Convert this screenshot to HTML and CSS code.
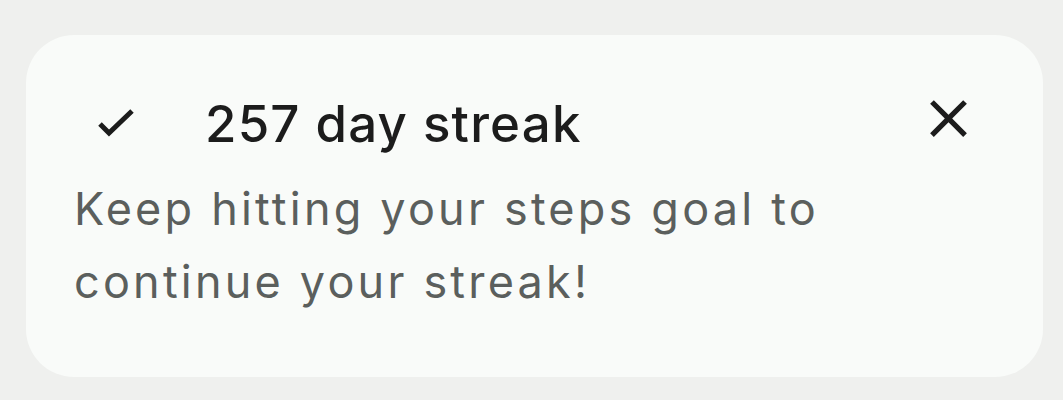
FILE: index.html
```html
<!DOCTYPE html>
<html lang="en">

<head>
  <meta charset="UTF-8">
  <meta name="viewport" content="width=device-width, initial-scale=1.0">
  <title>Streak</title>
  <link rel="stylesheet" href="styles.css">
</head>

<body>
  <div class="card">
    <div class="card-head">
      <svg class="check" viewBox="0 0 40 32" width="40" height="32">
        <polyline points="4,17 13,26 36,4" />
      </svg>
      <h1 class="title">257 day streak</h1>
      <svg class="close" viewBox="0 0 24 24" width="63" height="63">
        <path d="M19 6.41L17.59 5 12 10.59 6.41 5 5 6.41 10.59 12 5 17.59 6.41 19 12 13.41 17.59 19 19 17.59 13.41 12z" />
      </svg>
    </div>
    <p class="text">Keep hitting your steps goal to continue your streak!</p>
  </div>
</body>

</html>
```

FILE: styles.css
```css
body {
  margin: 0;
  padding: 35px 20px 0 26px;
  background-color: #eff0ee;
  font-family: Inter, Roboto, sans-serif;
}

.card {
  box-sizing: border-box;
  width: 1017px;
  height: 342px;
  padding: 52px 63px 0 48px;
  border-radius: 48px;
  background-color: #f9fbf9;
}

.card-head {
  display: flex;
  align-items: flex-start;
}

.check {
  margin: 20px 0 0 22px;
  fill: none;
  stroke: #1c1c1c;
  stroke-width: 5;
}

.title {
  flex: 1;
  margin: 6.5px 0 0 69px;
  font-size: 51px;
  font-weight: 500;
  line-height: 60px;
  letter-spacing: 1.2px;
  color: #1c1c1c;
}

.close {
  fill: #1c1c1c;
}

.text {
  max-width: 800px;
  margin: 18.5px 0 0;
  font-size: 45px;
  line-height: 73px;
  letter-spacing: 3.2px;
  color: #5b5f5d;
}
```
